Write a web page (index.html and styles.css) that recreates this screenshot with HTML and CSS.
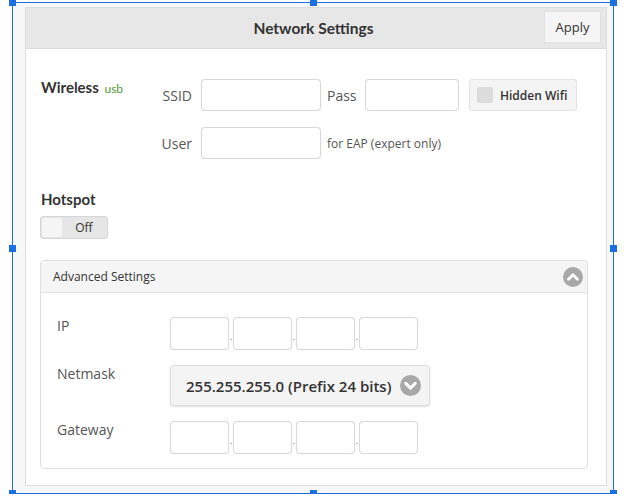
FILE: index.html
```html
<!DOCTYPE html>
<html lang="en">
    <head>
        <meta charset="UTF-8" />
        <meta name="viewport" content="width=device-width, initial-scale=1.0" />
        <title>Network Settings</title>
        <link rel="stylesheet" href="styles.css">
    </head>
    <body>
        <div class="frame">
            <span class="handle tl"></span>
            <span class="handle tc"></span>
            <span class="handle tr"></span>
            <span class="handle ml"></span>
            <span class="handle mr"></span>
            <span class="handle bl"></span>
            <span class="handle bc"></span>
            <span class="handle br"></span>

            <div class="panel">
                <div class="panel-head">
                    <span></span>
                    <h1>Network Settings</h1>
                    <button class="apply">Apply</button>
                </div>

                <div class="panel-body">
                    <div class="wireless">
                        <h2>Wireless <small>usb</small></h2>
                        <div class="fields">
                            <label>SSID</label>
                            <input type="text" class="text" />
                            <label class="mid">Pass</label>
                            <input type="text" class="text" />
                            <button class="check">
                                <span class="box"></span>Hidden Wifi
                            </button>

                            <label>User</label>
                            <input type="text" class="text" />
                            <span class="note">for EAP (expert only)</span>
                        </div>
                    </div>

                    <h2 class="hotspot">Hotspot</h2>
                    <div class="toggle">
                        <span class="knob"></span>
                        <span class="state">Off</span>
                    </div>

                    <div class="advanced">
                        <div class="adv-head">
                            <span>Advanced Settings</span>
                            <svg class="chev" viewBox="0 0 20 20" width="20" height="20">
                                <circle cx="10" cy="10" r="10" fill="#a8a8a8" />
                                <path d="M5.5 12.2 L10 7.7 L14.5 12.2" fill="none" stroke="#fff" stroke-width="2.8" stroke-linecap="round" stroke-linejoin="round" />
                            </svg>
                        </div>
                        <div class="adv-body">
                            <div class="row">
                                <label>IP</label>
                                <div class="octets">
                                    <input type="text" /><span class="dot">.</span>
                                    <input type="text" /><span class="dot">.</span>
                                    <input type="text" /><span class="dot">.</span>
                                    <input type="text" />
                                </div>
                            </div>
                            <div class="row">
                                <label>Netmask</label>
                                <div class="select">
                                    <span>255.255.255.0 (Prefix 24 bits)</span>
                                    <svg class="chev" viewBox="0 0 20 20" width="21" height="21">
                                        <circle cx="10" cy="10" r="10" fill="#a8a8a8" />
                                        <path d="M5.5 8 L10 12.5 L14.5 8" fill="none" stroke="#fff" stroke-width="2.8" stroke-linecap="round" stroke-linejoin="round" />
                                    </svg>
                                </div>
                            </div>
                            <div class="row">
                                <label>Gateway</label>
                                <div class="octets">
                                    <input type="text" /><span class="dot">.</span>
                                    <input type="text" /><span class="dot">.</span>
                                    <input type="text" /><span class="dot">.</span>
                                    <input type="text" />
                                </div>
                            </div>
                        </div>
                    </div>
                </div>
            </div>
        </div>
    </body>
</html>
```

FILE: styles.css
```css
*,
*::before,
*::after {
    padding: 0;
    margin: 0;
    box-sizing: border-box;
}

body {
    background: #fff;
    font-family: "Open Sans", "Liberation Sans", sans-serif;
    font-size: 14px;
    color: #555;
}

/* selection frame around the widget */
.frame {
    position: relative;
    width: 602px;
    height: 492px;
    margin: 2px 0 0 12px;
    padding: 4px 6px 7px 12px;
    border: 1px solid #1b6fe4;
    background: #f7f7f7;
}

.handle {
    position: absolute;
    width: 7px;
    height: 7px;
    background: #1b6fe4;

    &.tl { left: -4px; top: -4px; }
    &.tc { left: 297px; top: -4px; }
    &.tr { right: -4px; top: -4px; }
    &.ml { left: -4px; top: 242px; }
    &.mr { right: -4px; top: 242px; }
    &.bl { left: -4px; bottom: -4px; }
    &.bc { left: 297px; bottom: -4px; }
    &.br { right: -4px; bottom: -4px; }
}

.panel {
    width: 582px;
    height: 479px;
    border: 1px solid #dcdcdc;
    background: #fff;
}

.panel-head {
    display: grid;
    grid-template-columns: 1fr auto 1fr;
    align-items: center;
    height: 41px;
    padding-right: 5px;
    background: #e7e7e7;
    border-bottom: 1px solid #dadada;

    & h1 {
        font-family: Lato, "Open Sans", sans-serif;
        font-size: 15.5px;
        font-weight: 700;
        color: #333;
    }

    & .apply {
        justify-self: end;
        width: 57px;
        height: 32px;
        margin-top: -2px;
        border: 1px solid #e0e0e0;
        background: #f5f5f5;
        font-family: "Open Sans", sans-serif;
        font-size: 13px;
        color: #333;
    }
}

.panel-body {
    padding: 30px 18px 15px 14px;
}

h2 {
    font-family: Lato, "Open Sans", sans-serif;
    font-size: 15px;
    font-weight: 700;
    line-height: 20px;
    color: #333;

    & small {
        margin-left: 2px;
        font-size: 12px;
        font-weight: 400;
        color: #4f9a32;
    }
}

.wireless {
    display: flex;
    align-items: flex-start;

    & h2 {
        width: 115px;
        margin-top: -2px;
        padding-left: 1px;
    }
}

.fields {
    display: grid;
    grid-template-columns: 46px 120px 44px 94px auto;
    grid-auto-rows: 32px;
    row-gap: 16px;
    align-items: center;

    & label {
        text-align: right;
        padding-right: 9px;

        &.mid {
            text-align: left;
            padding-left: 6px;
            padding-right: 0;
        }
    }

    & .note {
        grid-column: 3 / 6;
        padding-left: 6px;
        font-size: 12px;
        color: #555;
    }
}

input[type="text"] {
    height: 32px;
    border: 1px solid #d9d9d9;
    border-radius: 4px;
    background: #fff;
    box-shadow: 0 0 1px rgba(0, 0, 0, 0.12);
    outline: none;

    &.text {
        width: 100%;
    }
}

.check {
    display: flex;
    align-items: center;
    width: 108px;
    height: 32px;
    margin-left: 10px;
    padding-left: 7px;
    border: 1px solid #e2e2e2;
    border-radius: 3px;
    background: #f4f4f4;
    font-family: "Open Sans", sans-serif;
    font-size: 12px;
    font-weight: 600;
    color: #333;

    & .box {
        width: 16px;
        height: 16px;
        margin-right: 7px;
        border-radius: 2px;
        background: #dcdcdc;
    }
}

.hotspot {
    margin-top: 30px;
    padding-left: 1px;
}

.toggle {
    display: flex;
    align-items: center;
    width: 68px;
    height: 23px;
    margin-top: 7px;
    padding: 1px;
    border: 1px solid #d6d6d6;
    border-radius: 3px;
    background: #e6e6e6;

    & .knob {
        width: 20px;
        height: 19px;
        border-radius: 2px;
        background: #f5f5f5;
    }

    & .state {
        flex: 1;
        text-align: center;
        font-size: 12px;
        color: #333;
    }
}

.advanced {
    width: 548px;
    margin-top: 21px;
    border: 1px solid #dfdfdf;
    border-radius: 4px;
    overflow: hidden;

    & .adv-head {
        display: flex;
        align-items: center;
        justify-content: space-between;
        height: 32px;
        padding: 0 4px 0 12px;
        background: #f5f5f5;
        border-bottom: 1px solid #e3e3e3;
        font-size: 12px;
        color: #333;
    }

    & .adv-body {
        display: flex;
        flex-direction: column;
        gap: 15px;
        padding: 24px 0 14px 16px;
    }
}

.chev {
    display: block;
}

.row {
    display: flex;
    align-items: flex-start;

    & > label {
        width: 113px;
        padding-top: 1px;
        line-height: 16px;
    }
}

.octets {
    display: flex;
    align-items: center;

    & input[type="text"] {
        width: 59px;
        height: 33px;
    }

    & .dot {
        width: 4px;
        padding-top: 6px;
        line-height: 14px;
        font-size: 9px;
        color: #8a4c4c;
        text-align: center;
    }
}

.select {
    display: flex;
    align-items: center;
    justify-content: space-between;
    width: 260px;
    height: 41px;
    padding: 0 8px 0 15px;
    border: 1px solid #dcdcdc;
    border-radius: 4px;
    background: #f4f4f4;
    box-shadow: 0 1px 2px rgba(0, 0, 0, 0.12);
    font-size: 15px;
    font-weight: 600;
    color: #333;
}
```
